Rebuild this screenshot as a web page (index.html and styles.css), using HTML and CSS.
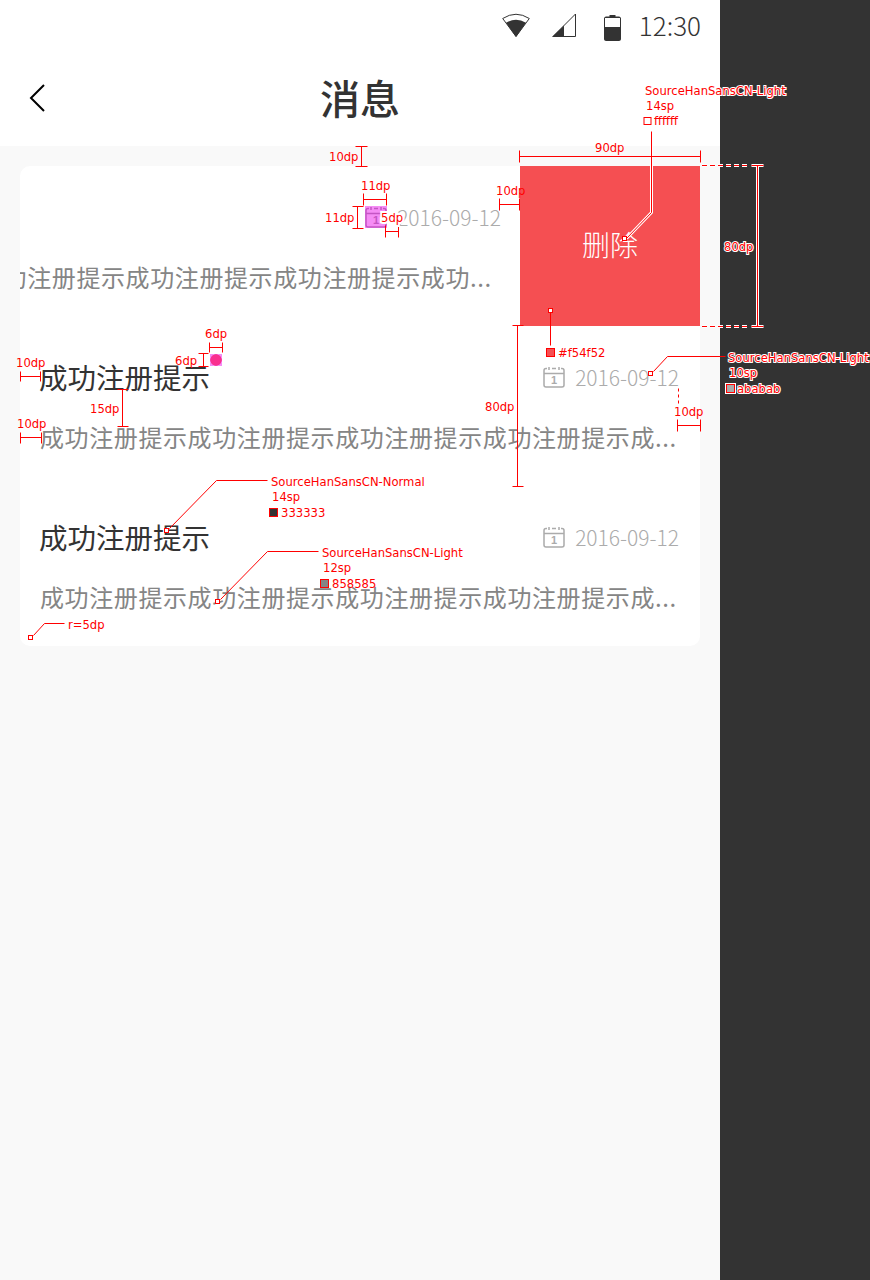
FILE: index.html
```html
<!DOCTYPE html>
<html lang="zh-CN">
<head>
  <meta charset="UTF-8" />
  <meta name="viewport" content="width=device-width, initial-scale=1" />
  <title>消息</title>
  <link rel="stylesheet" href="styles.css">
</head>
<body>

  <div class="screen">
    <div class="phone">

      <div class="statusbar">
        <svg class="icon-wifi" width="28" height="24" viewBox="0 0 28 24">
          <path d="M14 23.500L0.700 5.500Q14 -3 27.300 5.500Z" fill="#fff" stroke="#333" stroke-width="1"/>
          <path d="M14 24L4 9.800Q14 3.500 24 9.800Z" fill="#333"/>
        </svg>
        <svg class="icon-signal" width="24" height="24" viewBox="0 0 24 24">
          <path d="M23.500 1V23.500H1Z" fill="#fff" stroke="#333" stroke-width="1"/>
          <path d="M12 12.500V24H0Z" fill="#333"/>
        </svg>
        <svg class="icon-battery" width="17" height="26" viewBox="0 0 17 26">
          <path d="M5.500 0H11.500V1.500H15C16 1.500 17 2.500 17 3.500V24C17 25 16 26 15 26H2C1 26 0 25 0 24V3.500C0 2.500 1 1.500 2 1.500H5.500Z" fill="#333"/>
          <rect x="1" y="3" width="15" height="9" fill="#fff"/>
        </svg>
        <span class="clock">12:30</span>
      </div>

      <div class="topbar">
        <svg class="back" width="18" height="28" viewBox="0 0 18 28">
          <path d="M16 1L3 14L16 27" fill="none" stroke="#000" stroke-width="2"/>
        </svg>
        <h1>消息</h1>
      </div>

      <div class="content">
        <div class="card">

          <div class="row row-swiped">
            <div class="row-head">
              <span class="date">
                <svg class="cal cal-marked" width="22" height="22" viewBox="0 0 22 22">
                  <path d="M6 1V4M16 1V4M9 2.500H13M1 7.500H21M4 2.500H3C2 2.500 1 3.500 1 4.500V19C1 20 2 21 3 21H19C20 21 21 20 21 19V4.500C21 3.500 20 2.500 19 2.500H18" fill="none" stroke="#c455c4" stroke-width="1.500"/>
                  <text x="11" y="18" text-anchor="middle" font-size="11" font-weight="700" font-family="Liberation Sans" fill="#c455c4">1</text>
                </svg>
                2016-09-12
              </span>
            </div>
            <p class="row-text">成功注册提示成功注册提示成功注册提示成功...</p>
            <button class="delete" type="button">删除</button>
          </div>

          <div class="row">
            <div class="row-head">
              <span class="row-title">成功注册提示<i class="dot"></i></span>
              <span class="date">
                <svg class="cal" width="22" height="22" viewBox="0 0 22 22">
                  <path d="M6 1V4M16 1V4M9 2.500H13M1 7.500H21M4 2.500H3C2 2.500 1 3.500 1 4.500V19C1 20 2 21 3 21H19C20 21 21 20 21 19V4.500C21 3.500 20 2.500 19 2.500H18" fill="none" stroke="#ababab" stroke-width="1.500"/>
                  <text x="11" y="18" text-anchor="middle" font-size="11" font-weight="700" font-family="Liberation Sans" fill="#ababab">1</text>
                </svg>
                2016-09-12
              </span>
            </div>
            <p class="row-text">成功注册提示成功注册提示成功注册提示成功注册提示成...</p>
          </div>

          <div class="row">
            <div class="row-head">
              <span class="row-title">成功注册提示</span>
              <span class="date">
                <svg class="cal" width="22" height="22" viewBox="0 0 22 22">
                  <path d="M6 1V4M16 1V4M9 2.500H13M1 7.500H21M4 2.500H3C2 2.500 1 3.500 1 4.500V19C1 20 2 21 3 21H19C20 21 21 20 21 19V4.500C21 3.500 20 2.500 19 2.500H18" fill="none" stroke="#ababab" stroke-width="1.500"/>
                  <text x="11" y="18" text-anchor="middle" font-size="11" font-weight="700" font-family="Liberation Sans" fill="#ababab">1</text>
                </svg>
                2016-09-12
              </span>
            </div>
            <p class="row-text">成功注册提示成功注册提示成功注册提示成功注册提示成...</p>
          </div>

        </div>
      </div>
    </div>

    <div class="side"></div>

    <!-- redline spec marks on top of the design -->
    <svg class="marks" width="870" height="1280" viewBox="0 0 870 1280">
      <g class="halo" transform="translate(.5 .5)">
        <path d="M651 131V212L626 238"/>
        <path d="M757 165V326M751 165H763M751 326H763"/>
      </g>
      <path class="dash-light" d="M702 165.500H750M702 326.500H750"/>
      <path class="dash-core" d="M702 165.500H750M702 326.500H750"/>
      <g class="lines" transform="translate(.5 .5)">
        <path d="M361 146V166M355 146H367M355 166H367"/>
        <path d="M363 199H386M363 193V205M386 193V205"/>
        <path d="M357 206V228M352 206H363M352 228H363"/>
        <path d="M385 231H398M385 225V237M398 225V237"/>
        <path d="M499 204H519M499 198V210M519 198V210"/>
        <path d="M519 156H700M519 150V162M700 150V162"/>
        <path d="M651 131V212L626 238"/>
        <path d="M757 165V326M751 165H763M751 326H763"/>
        <path d="M550 312V345"/>
        <path d="M209 347H222M209 342V352M222 342V352"/>
        <path d="M203 353V366M198 353H208M198 366H208"/>
        <path d="M20 376H40M20 371V381M40 371V381"/>
        <path d="M122 389V426M117 389H128M117 426H128"/>
        <path d="M20 437H41M20 432V443M41 432V443"/>
        <path d="M653 371L667 356H725"/>
        <path d="M677 425H700M677 419V431M700 419V431"/>
        <path d="M517 325V486M512 325H523M512 486H523"/>
        <path d="M169 528L216 480H267"/>
        <path d="M220 599L267 551H318"/>
        <path d="M33 635L44 623H64"/>
        <path class="dash-red" d="M678 388V403"/>
      </g>

      <rect class="pin" x="622.500" y="236.500" width="4" height="4"/>
      <rect class="pin" x="548.500" y="308.500" width="4" height="4"/>
      <rect class="pin" x="648.500" y="371.500" width="4" height="4"/>
      <rect class="pin" x="164.500" y="528.500" width="4" height="4"/>
      <rect class="pin" x="215.500" y="599.500" width="4" height="4"/>
      <rect class="pin" x="28.500" y="635.500" width="4" height="4"/>

      <rect class="swatch" x="644" y="117.500" width="7" height="7" fill="#fff"/>
      <rect class="swatch" x="546.500" y="348.500" width="8" height="8" fill="#f54f52"/>
      <rect class="swatch-halo" x="725" y="383" width="11" height="11"/>
      <rect class="swatch" x="726.500" y="384.500" width="8" height="8" fill="#ababab"/>
      <rect class="swatch" x="269.500" y="508.500" width="8" height="8" fill="#333"/>
      <rect class="swatch" x="320.500" y="579.500" width="8" height="8" fill="#858585"/>

      <g class="notes">
        <text x="329" y="161">10dp</text>
        <text x="361" y="190">11dp</text>
        <text x="325" y="222">11dp</text>
        <text class="on-dark wide-halo" x="381" y="222">5dp</text>
        <text x="496" y="195">10dp</text>
        <text x="595" y="152">90dp</text>
        <text class="on-dark" x="645" y="95">SourceHanSansCN-Light</text>
        <text x="646" y="110">14sp</text>
        <text x="654" y="125">ffffff</text>
        <text class="on-dark" x="724" y="251">80dp</text>
        <text x="558" y="357">#f54f52</text>
        <text x="205" y="338">6dp</text>
        <text x="175" y="365">6dp</text>
        <text x="16" y="367">10dp</text>
        <text x="90" y="413">15dp</text>
        <text x="17" y="428">10dp</text>
        <text class="on-dark" x="728" y="362">SourceHanSansCN-Light</text>
        <text class="on-dark" x="729" y="377">10sp</text>
        <text class="on-dark" x="737" y="393">ababab</text>
        <text x="674" y="416">10dp</text>
        <text x="485" y="411">80dp</text>
        <text x="271" y="486">SourceHanSansCN-Normal</text>
        <text x="272" y="501">14sp</text>
        <text x="281" y="517">333333</text>
        <text x="322" y="557">SourceHanSansCN-Light</text>
        <text x="323" y="572">12sp</text>
        <text x="332" y="588">858585</text>
        <text x="68" y="629">r=5dp</text>
      </g>
    </svg>
  </div>

</body>
</html>
```

FILE: styles.css
```css
* {
  box-sizing: border-box;
}
body {
  margin: 0;
  font-family: "Noto Sans CJK SC", "Noto Sans", sans-serif;
  color: #333;
}
.screen {
  position: relative;
  display: flex;
  width: 870px;
  height: 1280px;
  overflow: hidden;
}
.phone {
  width: 720px;
  display: flex;
  flex-direction: column;
  background: #f9f9f9;
}
.side {
  flex: 1;
  background: #333;
}

.statusbar {
  height: 50px;
  background: #fff;
  display: flex;
  align-items: center;
  justify-content: flex-end;
  padding-right: 19px;
}
.icon-wifi {
  margin-right: 22px;
}
.icon-signal {
  margin-right: 28px;
}
.icon-battery {
  margin-top: 6px;
  margin-right: 18px;
}
.clock {
  font-size: 26px;
  font-weight: 300;
  line-height: 50px;
  margin-top: -1px;
  color: #333;
}

.topbar {
  position: relative;
  height: 96px;
  background: #fff;
  display: flex;
  align-items: center;
  justify-content: center;
}
.topbar h1 {
  margin: -2px 0 0;
  font-size: 40px;
  font-weight: 500;
  line-height: 96px;
  color: #333;
}
.back {
  position: absolute;
  left: 28px;
  top: 34px;
}

.content {
  flex: 1;
  padding: 20px;
}
.card {
  background: #fff;
  border-radius: 10px;
}
.row {
  position: relative;
  height: 160px;
  padding: 31px 20px 0;
  overflow: hidden;
}
.row-head {
  height: 40px;
  display: flex;
  align-items: center;
  justify-content: space-between;
}
.row-title {
  position: relative;
  font-size: 28.500px;
  line-height: 40px;
  margin-left: -1px;
  color: #333;
}
.dot {
  position: absolute;
  left: 100%;
  top: -3px;
  width: 12px;
  height: 12px;
  background: radial-gradient(circle closest-side, #f92f8f 90%, #f58cf5 100%);
}
.date {
  display: flex;
  align-items: center;
  gap: 10px;
  font-size: 21px;
  font-weight: 300;
  color: #ababab;
  margin-right: 1px;
}
.cal {
  display: block;
}
.cal-marked {
  background: #f58cf5;
}
.row-text {
  margin: 20px 0 0;
  font-size: 24px;
  letter-spacing: 0.6px;
  line-height: 40px;
  color: #858585;
  white-space: nowrap;
}

.row-swiped .row-head {
  justify-content: flex-end;
  padding-right: 178px;
}
.row-swiped .row-text {
  margin-left: -62px;
}
.delete {
  position: absolute;
  right: 0;
  top: 0;
  width: 180px;
  height: 160px;
  border: 0;
  padding: 0 0 4px;
  background: #f54f52;
  color: #fff;
  font-family: inherit;
  font-size: 28px;
  font-weight: 300;
}

.marks {
  position: absolute;
  left: 0;
  top: 0;
}
.lines path {
  fill: none;
  stroke: #f00;
  stroke-width: 1;
}
.lines .dash-red {
  stroke-dasharray: 3 3;
}
.halo path {
  fill: none;
  stroke: #fff;
  stroke-width: 3;
}
.dash-light {
  fill: none;
  stroke: #fff;
  stroke-width: 3;
  stroke-dasharray: 5 3;
}
.dash-core {
  fill: none;
  stroke: #f00;
  stroke-width: 1;
  stroke-dasharray: 5 3;
}
.pin {
  fill: #fff;
  stroke: #f00;
  stroke-width: 1;
}
.swatch {
  stroke: #f00;
  stroke-width: 1;
}
.swatch-halo {
  fill: #fff;
}
.notes text {
  font-family: "DejaVu Sans", sans-serif;
  font-size: 11.600px;
  fill: #f00;
}
.notes .on-dark {
  paint-order: stroke;
  stroke: #fff;
  stroke-width: 2px;
}
.notes .wide-halo {
  stroke-width: 4px;
}
```
